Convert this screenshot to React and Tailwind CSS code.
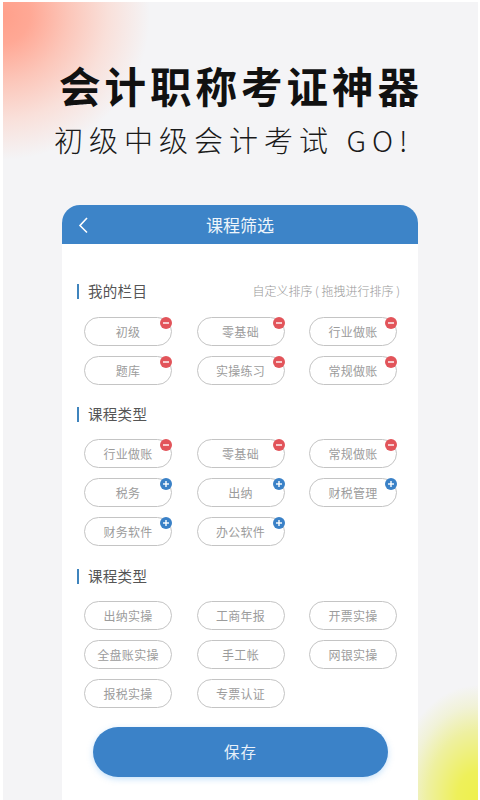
import React from "react";

const FONT = "font-['Noto_Sans_CJK_SC','Liberation_Sans',sans-serif]";

function Badge({ kind }) {
  const minus = kind === "minus";
  return (
    <span className={`absolute -top-[1px] -right-[1px] flex h-[12px] w-[12px] items-center justify-center rounded-full ${minus ? "bg-[#e2545a]" : "bg-[#3a81c7]"}`}>
      <svg width="8" height="8" viewBox="0 0 8 8" fill="none">
        <path d="M1 4H7" stroke="white" strokeWidth="1.4" />
        {!minus && <path d="M4 1V7" stroke="white" strokeWidth="1.4" />}
      </svg>
    </span>
  );
}

function Pill({ label, badge }) {
  return (
    <div className="relative flex h-[29px] w-[88px] items-center justify-center rounded-full border border-[#c4c4c4] bg-white text-[12px] leading-none tracking-[0.3px] text-[#9c9c9c]">
      {label}
      {badge && <Badge kind={badge} />}
    </div>
  );
}

function Heading({ children, right }) {
  return (
    <div className="flex h-[16px] items-center justify-between pr-[18px]">
      <div className="flex items-center">
        <span className="h-[15px] w-[2px] bg-[#3f84bd]" />
        <span className="ml-[9px] text-[14.5px] leading-none tracking-[0.3px] text-[#555555]">{children}</span>
      </div>
      {right && <span className="text-[12px] font-light leading-none whitespace-nowrap text-[#999999]">{right}</span>}
    </div>
  );
}

function Grid({ items, top }) {
  return (
    <div className={`${top} grid grid-cols-[88px_88px_88px] gap-x-[24.5px] gap-y-[10px] pl-[7px]`}>
      {items.map(([label, badge], i) => (
        <Pill key={i} label={label} badge={badge} />
      ))}
    </div>
  );
}

const mine = [["初级", "minus"], ["零基础", "minus"], ["行业做账", "minus"], ["题库", "minus"], ["实操练习", "minus"], ["常规做账", "minus"]];
const types = [["行业做账", "minus"], ["零基础", "minus"], ["常规做账", "minus"], ["税务", "plus"], ["出纳", "plus"], ["财税管理", "plus"], ["财务软件", "plus"], ["办公软件", "plus"]];
const practice = [["出纳实操"], ["工商年报"], ["开票实操"], ["全盘账实操"], ["手工帐"], ["网银实操"], ["报税实操"], ["专票认证"]];

export default function App() {
  return (
    <div className={`relative h-[800px] w-[480px] overflow-hidden bg-white ${FONT}`}>
      <div className="relative mt-[2px] ml-[3px] mr-[2px] h-[798px] overflow-hidden bg-[#f4f4f6]">
        <div className="absolute -left-[3px] -top-[2px] h-[220px] w-[220px] bg-[radial-gradient(ellipse_150px_145px_at_0px_15px,#ff9f8a_0%,#ffa895_20%,#fcc5b8_45%,#f9e0da_72%,rgba(244,244,246,0)_100%)]" />
        <div className="absolute right-0 bottom-0 h-[130px] w-[90px] bg-[radial-gradient(ellipse_85px_115px_at_100%_100%,#eef04c_0%,#eef05a_25%,#eef0a0_60%,#f1f2d8_82%,rgba(244,244,246,0)_100%)]" />

        <div className="relative flex flex-col pt-[55px]">
          <h1 className="ml-[56px] text-[41.5px] font-bold leading-[56px] tracking-[4px] whitespace-nowrap text-[#111111]">会计职称考证神器</h1>
          <p className="mt-[7px] ml-[51px] text-[29px] font-light leading-[38px] tracking-[6px] whitespace-nowrap text-[#1a1a1a]">初级中级会计考试 GO!</p>

          <section className="mt-[47px] ml-[59px] h-[610px] w-[356px] overflow-hidden rounded-t-[18px] bg-white">
            <header className="relative flex h-[39px] items-center justify-center bg-[#3d84c8]">
              <svg className="absolute left-[15px] top-[11px]" width="12" height="18" viewBox="0 0 12 18" fill="none">
                <path d="M10 2L3 9.5L10 16.5" stroke="white" strokeWidth="1.6" />
              </svg>
              <span className="text-[17px] leading-none text-[#eef5fb]">课程筛选</span>
            </header>
            <div className="pt-[39px] pl-[15px]">
              <Heading right="自定义排序 ( 拖拽进行排序 )">我的栏目</Heading>
              <Grid items={mine} top="mt-[18px]" />
            </div>
            <div className="mt-[21px] pl-[15px]">
              <Heading>课程类型</Heading>
              <Grid items={types} top="mt-[17px]" />
            </div>
            <div className="mt-[22px] pl-[15px]">
              <Heading>课程类型</Heading>
              <Grid items={practice} top="mt-[17px]" />
            </div>
            <button className="mt-[19px] ml-[31px] flex h-[50px] w-[295px] items-center justify-center rounded-full bg-[#3b82c8] text-[15.5px] tracking-[1px] text-[#e8f1fa] shadow-[0_2px_6px_rgba(90,170,240,0.35)]">
              保存
            </button>
          </section>
        </div>
      </div>
    </div>
  );
}
